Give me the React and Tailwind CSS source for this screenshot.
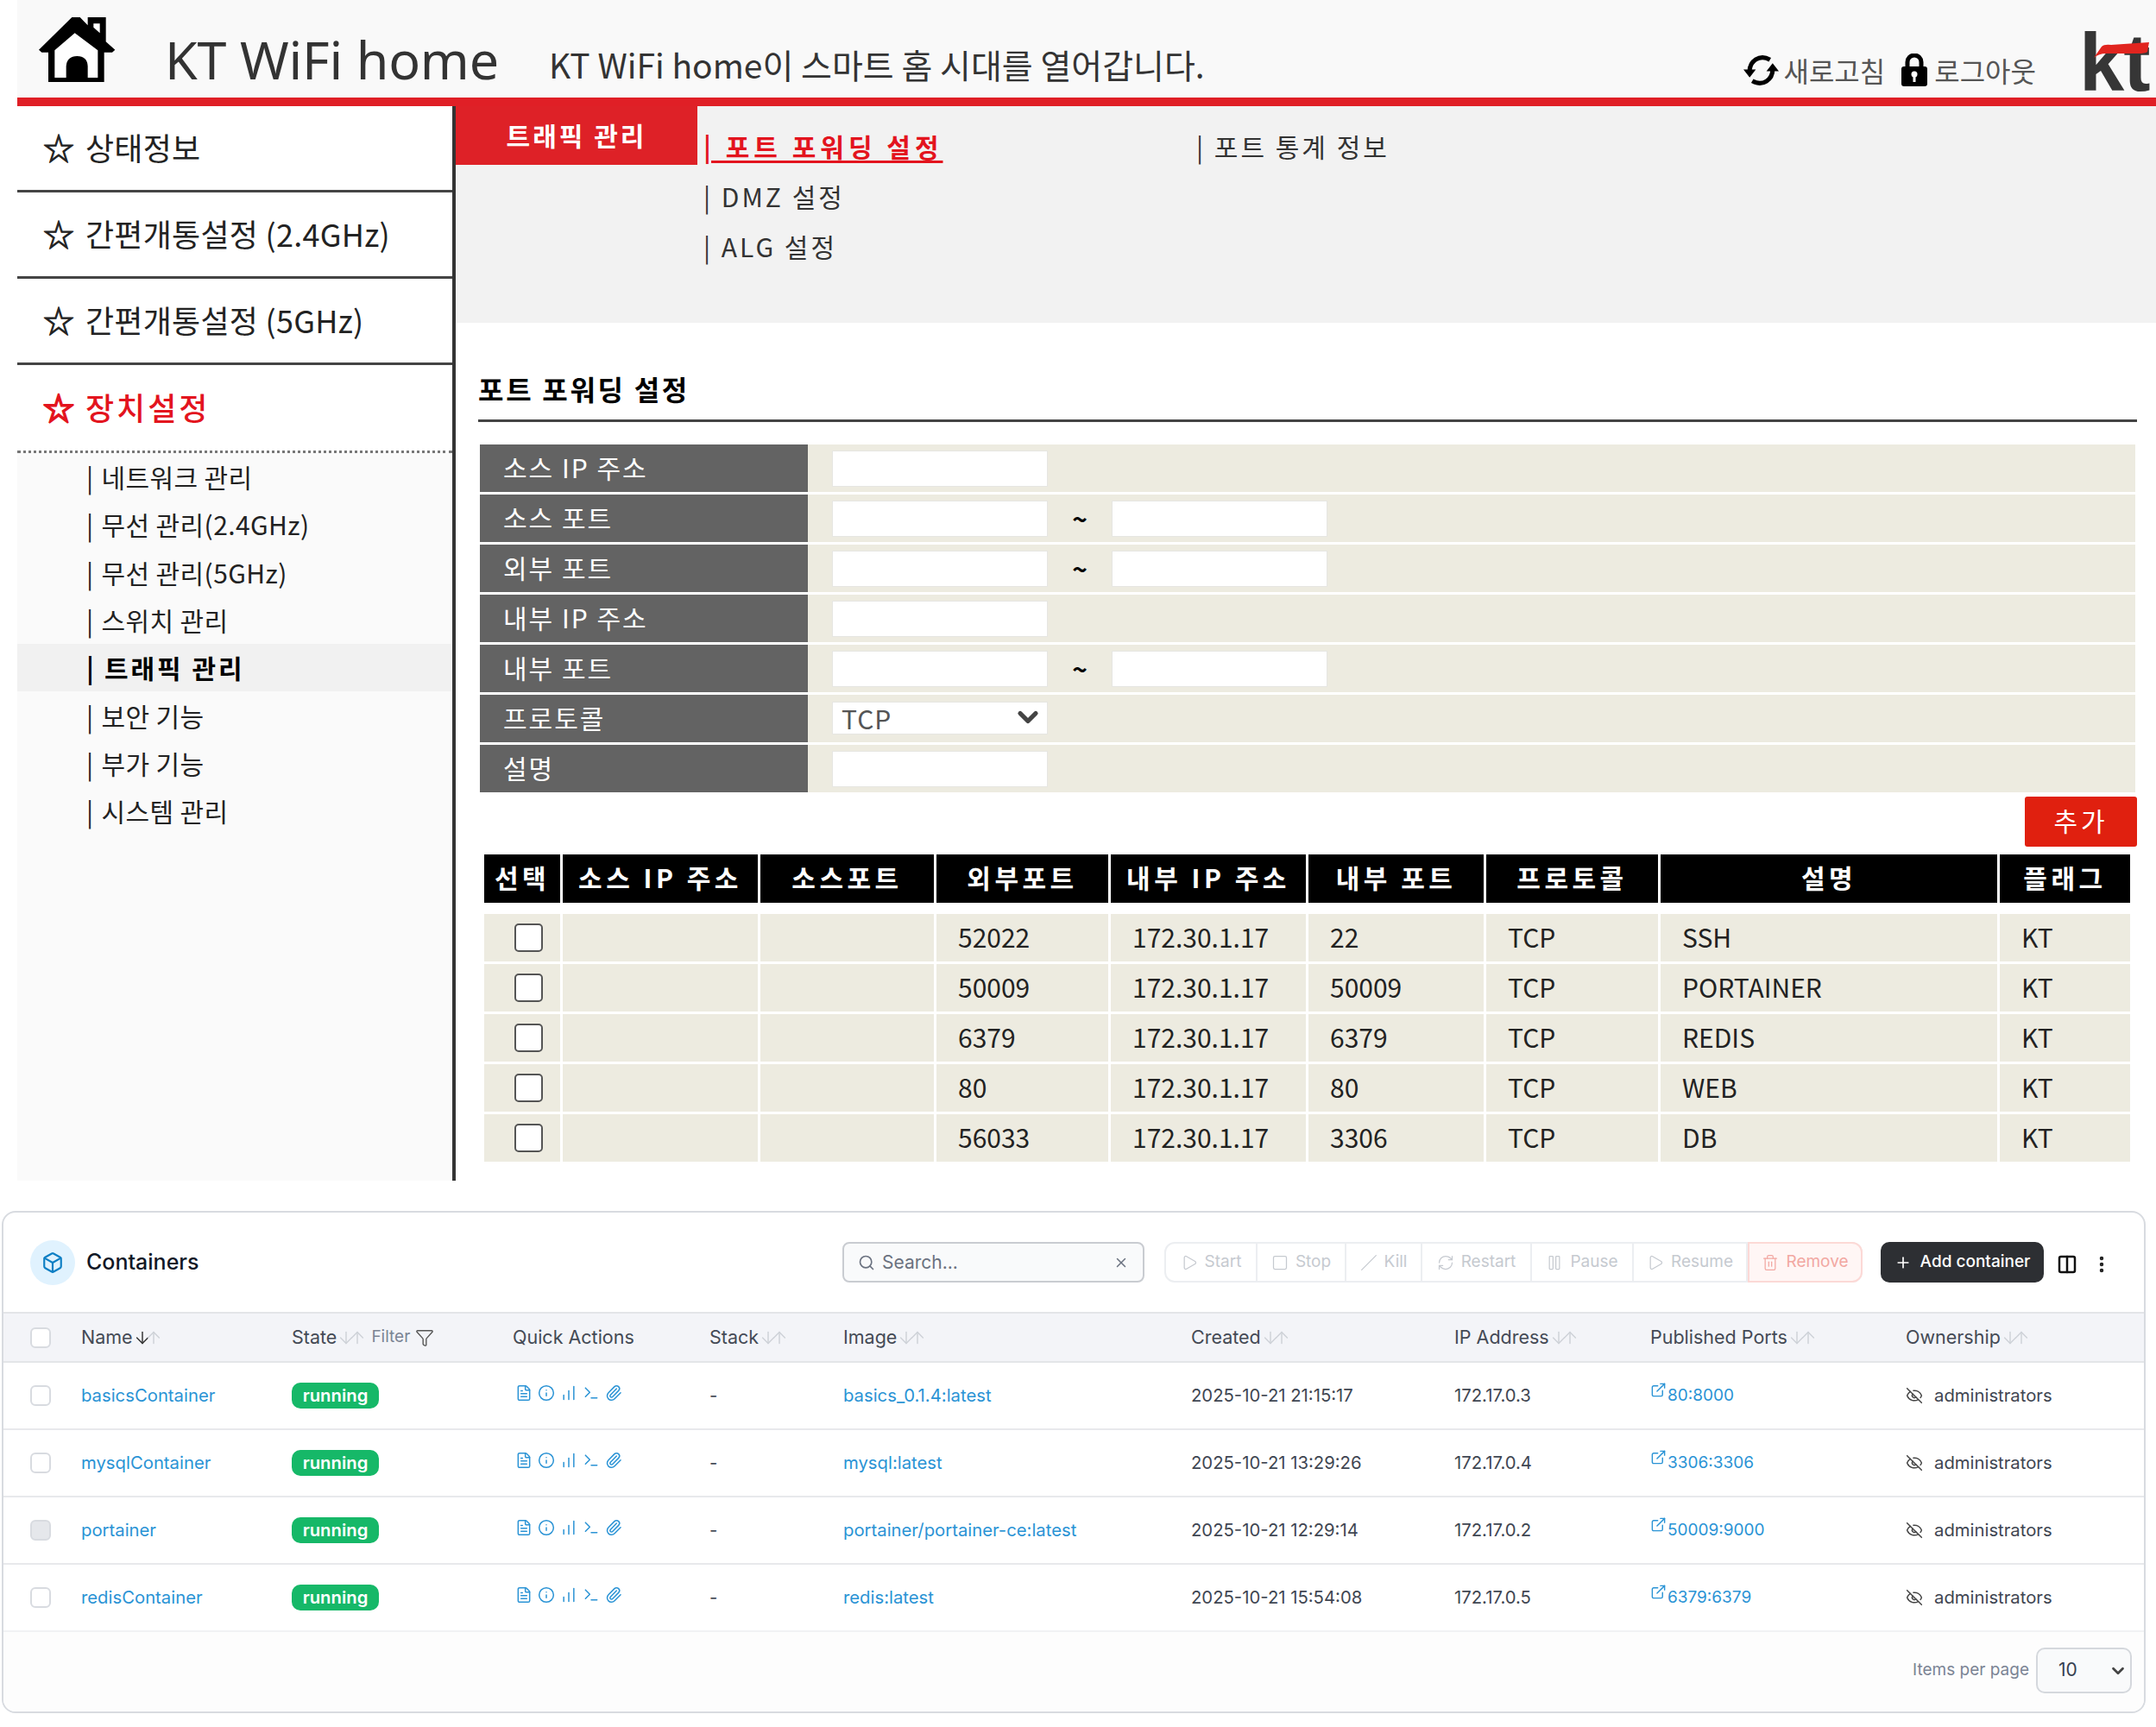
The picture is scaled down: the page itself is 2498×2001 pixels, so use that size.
import {
  ArrowDown, ArrowUp, Box, ChartNoAxesColumnIncreasing, ChevronDown, Columns2, EllipsisVertical, ExternalLink,
  EyeOff, FileText, Filter, Info, Paperclip, Pause, Play, Plus, RefreshCw, Search, Slash, Square, Terminal, Trash2, X,
} from 'lucide-react';

const sideMenu = ['상태정보', '간편개통설정 (2.4GHz)', '간편개통설정 (5GHz)'];
const subMenu = ['네트워크 관리', '무선 관리(2.4GHz)', '무선 관리(5GHz)', '스위치 관리', '트래픽 관리', '보안 기능', '부가 기능', '시스템 관리'];

const formRows = [
  { label: '소스 IP 주소' },
  { label: '소스 포트', range: true },
  { label: '외부 포트', range: true },
  { label: '내부 IP 주소' },
  { label: '내부 포트', range: true },
  { label: '프로토콜', select: true },
  { label: '설명' },
];

const portHeaders = ['선택', '소스 IP 주소', '소스포트', '외부포트', '내부 IP 주소', '내부 포트', '프로토콜', '설명', '플래그'];
const portRows = [
  ['52022', '172.30.1.17', '22', 'SSH'],
  ['50009', '172.30.1.17', '50009', 'PORTAINER'],
  ['6379', '172.30.1.17', '6379', 'REDIS'],
  ['80', '172.30.1.17', '80', 'WEB'],
  ['56033', '172.30.1.17', '3306', 'DB'],
];

const containers = [
  { name: 'basicsContainer', image: 'basics_0.1.4:latest', created: '2025-10-21 21:15:17', ip: '172.17.0.3', port: '80:8000' },
  { name: 'mysqlContainer', image: 'mysql:latest', created: '2025-10-21 13:29:26', ip: '172.17.0.4', port: '3306:3306' },
  { name: 'portainer', image: 'portainer/portainer-ce:latest', created: '2025-10-21 12:29:14', ip: '172.17.0.2', port: '50009:9000', locked: true },
  { name: 'redisContainer', image: 'redis:latest', created: '2025-10-21 15:54:08', ip: '172.17.0.5', port: '6379:6379' },
];

const actions = [
  { label: 'Start', icon: Play, w: 'w-[106px]' },
  { label: 'Stop', icon: Square, w: 'w-[103px]' },
  { label: 'Kill', icon: Slash, w: 'w-[88px]' },
  { label: 'Restart', icon: RefreshCw, w: 'w-[127px]' },
  { label: 'Pause', icon: Pause, w: 'w-[118px]' },
  { label: 'Resume', icon: Play, w: 'w-[132px]' },
];

const quickIcons = [FileText, Info, ChartNoAxesColumnIncreasing, Terminal, Paperclip];

function HomeIcon() {
  return (
    <svg viewBox="0 0 360 300" className="w-[120px] h-[100px] shrink-0">
      <path d="M45 143 160 30h28l27 28V30h63v85l32 28-10 9h-28v103H78V152H55z" fill="#000" />
      <path d="M170 85l80 60v95h-35v-40q-2-35-37-35t-38 35v40h-40v-95z" fill="#fff" />
      <path d="M235 52h22v33l-22-20z" fill="#fff" />
    </svg>
  );
}

function RefreshIcon() {
  return (
    <svg viewBox="0 0 40 40" className="w-[41px] h-[41px] shrink-0">
      <path d="M7 21C7 10 18 1 30 8M33 19C33 30 22 39 10 32" fill="none" stroke="#000" strokeWidth="5" />
      <path d="M0 19h14l-7 9zM26 21h14l-7-9z" fill="#000" />
    </svg>
  );
}

function LockIcon() {
  return (
    <svg viewBox="0 0 30 38" className="w-[30px] h-[38px] shrink-0">
      <path d="M7 16V10a8 8 0 0 1 16 0v6" fill="none" stroke="#000" strokeWidth="5" />
      <rect x="0" y="15" width="30" height="23" rx="3" fill="#000" />
      <circle cx="15" cy="24" r="3.5" fill="#fff" />
      <rect x="13.5" y="25" width="3" height="8" fill="#fff" />
    </svg>
  );
}

function KtLogo() {
  return (
    <div className="relative w-[85px] h-[70px] shrink-0 font-['Liberation_Sans',sans-serif] font-bold text-[94px] leading-[70px] tracking-[-1px] text-[#363636]">
      kt
      <svg viewBox="0 0 64 18" className="absolute left-[17px] top-[11px] w-[64px] h-[18px]">
        <path d="M0 18 9 5Q12 2 20 3L64 0 62 11Q60 13 50 13L14 13Q6 13 0 18z" fill="#e1251f" />
      </svg>
    </div>
  );
}

function Header() {
  return (
    <header className="ml-[20px] h-[113px] bg-[#f9f9f9] flex items-start text-[#333]">
      <div className="ml-[10px] mt-[10px]">
        <HomeIcon />
      </div>
      <div className="ml-[41px] mt-[29px] text-[61px] leading-[80px] font-['Noto_Sans',sans-serif] tracking-[-0.2px]">KT WiFi home</div>
      <div className="ml-[58px] mt-[47px] text-[39px] leading-[54px] whitespace-nowrap">KT WiFi home이 스마트 홈 시대를 열어갑니다.</div>
      <div className="ml-auto mt-[59px] flex items-center gap-[2px]">
        <RefreshIcon />
        <span className="ml-[3px] text-[32px] leading-[44px] text-[#555]">새로고침</span>
        <span className="ml-[17px]"><LockIcon /></span>
        <span className="ml-[6px] text-[32px] leading-[44px] text-[#555]">로그아웃</span>
      </div>
      <div className="ml-[50px] mt-[38px] mr-[4px]">
        <KtLogo />
      </div>
    </header>
  );
}

function Sidebar() {
  return (
    <aside className="ml-[20px] w-[508px] shrink-0 border-r-4 border-[#333] flex flex-col text-[36px] text-[#222]">
      {sideMenu.map((item) => (
        <div key={item} className="h-[100px] border-b-[3px] border-[#444] flex items-center pl-[30px] pb-[3px] tracking-[0.25px] whitespace-nowrap">
          <span className="w-[49px] shrink-0 [-webkit-text-stroke:1px_#222]">☆</span>{item}
        </div>
      ))}
      <div className="h-[102px] border-b-[3px] border-dotted border-[#777] flex items-center pl-[30px] pb-[3px] text-[#e3141e] font-medium tracking-[3px]">
        <span className="w-[49px] shrink-0 tracking-normal [-webkit-text-stroke:2px_#e3141e]">☆</span>장치설정
      </div>
      <ul className="flex-1 bg-[#fafafa] text-[30px]">
        {subMenu.map((item) => (
          <li key={item} className={`h-[55.3px] flex items-center pl-[80px] ${item === '트래픽 관리' ? 'bg-[#f1f1f1] font-bold text-black tracking-[3px]' : 'tracking-[0.4px]'}`}>
            <span className="mr-[9px]">|</span>{item}
          </li>
        ))}
      </ul>
    </aside>
  );
}

function TopTabs() {
  return (
    <div className="h-[251px] bg-[#f2f2f2] flex text-[30px] text-[#333] tracking-[3px]">
      <div className="w-[280px] h-[68px] bg-[#de2127] text-white font-bold flex items-center justify-center pb-[2px]">트래픽 관리</div>
      <div className="ml-[7px] pt-[17px] grid grid-cols-[571px_auto] auto-rows-[58px] items-center">
        <span className="text-[#e3141e] font-bold tracking-[5px] underline underline-offset-4">| 포트 포워딩 설정</span>
        <span>| 포트 통계 정보</span>
        <span className="col-start-1">| DMZ 설정</span>
        <span className="col-start-1">| ALG 설정</span>
      </div>
    </div>
  );
}

function PortForm() {
  const field = 'w-[250px] h-[42px] bg-white border border-[#e6e6e2] outline-none';
  return (
    <div className="ml-[2px] w-[1918px] flex flex-col gap-[3px] text-[30px]">
      {formRows.map((row) => (
        <div key={row.label} className="h-[55px] flex bg-[#edebe0]">
          <div className="w-[380px] bg-[#636363] text-white flex items-center pl-[27px] pb-[2px] tracking-[2px]">{row.label}</div>
          <div className="ml-[28px] flex items-center">
            {row.select ? (
              <div className="relative">
                <select className={`${field} !h-[38px] appearance-none pl-[10px] text-[30px] leading-[34px] tracking-[1px] text-[#555]`} defaultValue="TCP">
                  <option>TCP</option>
                </select>
                <ChevronDown size={36} strokeWidth={3.5} className="absolute right-[5px] top-[3px] text-[#444]" />
              </div>
            ) : (
              <input className={field} />
            )}
            {row.range && (
              <>
                <span className="w-[74px] text-center text-black text-[30px] font-bold">~</span>
                <input className={field} />
              </>
            )}
          </div>
        </div>
      ))}
    </div>
  );
}

function PortTable() {
  const cols = 'grid grid-cols-[88px_226px_201px_199px_226px_203px_199px_390px_151px] gap-x-[3px]';
  return (
    <div className="ml-[7px] text-[30px]">
      <div className={`${cols} h-[56px]`}>
        {portHeaders.map((h) => (
          <div key={h} className="bg-black text-white font-bold tracking-[4.5px] flex items-center justify-center pb-[3px] whitespace-nowrap">{h}</div>
        ))}
      </div>
      <div className="mt-[13px] flex flex-col gap-[3px] text-[#222]">
        {portRows.map((r) => (
          <div key={r[0]} className={`${cols} h-[55px]`}>
            <div className="bg-[#edebe0] flex items-center pl-[35px]">
              <input type="checkbox" className="appearance-none w-[33px] h-[33px] bg-white border-2 border-[#555] rounded-[5px]" />
            </div>
            <div className="bg-[#edebe0]" />
            <div className="bg-[#edebe0]" />
            {[r[0], r[1], r[2], 'TCP', r[3], 'KT'].map((v, i) => (
              <div key={i} className="bg-[#edebe0] flex items-center pl-[25px] pb-[3px]">{v}</div>
            ))}
          </div>
        ))}
      </div>
    </div>
  );
}

function SortArrows({ active }) {
  return (
    <span className="inline-flex text-[#ced2d8]">
      <ArrowDown size={22} strokeWidth={1.6} className={active ? 'text-[#333]' : ''} />
      <ArrowUp size={22} strokeWidth={1.6} className="-ml-[9px]" />
    </span>
  );
}

function Containers() {
  const cols = 'grid grid-cols-[90px_244px_256px_228px_155px_403px_305px_227px_296px_276px] items-center';
  const link = 'text-[#2a93d5]';
  return (
    <section className="mt-[35px] ml-[2px] w-[2484px] h-[582px] border-2 border-[#d8dbe0] rounded-[16px] bg-white font-['Inter',sans-serif] text-[20.3px] text-[#3f4652] overflow-hidden flex flex-col">
      <div className="h-[115px] shrink-0 flex items-center pl-[31px] pr-[37px]">
        <div className="w-[52px] h-[52px] rounded-full bg-[#e0f2fe] flex items-center justify-center">
          <Box size={26} className="text-[#0e7fc4]" />
        </div>
        <h2 className="ml-[13px] text-[25px] font-medium text-[#111827]">Containers</h2>
        <div className="ml-auto w-[350px] h-[47px] border-2 border-[#c9ccd1] rounded-[8px] bg-[#f9fafb] flex items-center px-[16px] text-[#6b7280]">
          <Search size={20} />
          <span className="ml-[8px] flex-1 text-[21px]">Search...</span>
          <X size={18} />
        </div>
        <div className="ml-[23px] h-[47px] flex border-2 border-[#eceef1] rounded-[12px] text-[19px] text-[#c6cad0]">
          {actions.map((a) => (
            <div key={a.label} className={`${a.w} flex items-center justify-center gap-[8px] border-r-2 border-[#eceef1]`}>
              <a.icon size={20} strokeWidth={1.5} />
              {a.label}
            </div>
          ))}
          <div className="w-[133px] -my-[2px] -mr-[2px] flex items-center justify-center gap-[8px] border-2 border-[#fcd9d6] rounded-r-[12px] bg-[#fff6f5] text-[#f2a8a2]">
            <Trash2 size={20} strokeWidth={1.5} />
            Remove
          </div>
        </div>
        <button className="ml-[21px] w-[189px] h-[47px] bg-[#2d2f33] rounded-[10px] text-[19px] text-white font-medium flex items-center justify-center gap-[10px]">
          <Plus size={20} />
          Add container
        </button>
        <Columns2 size={24} strokeWidth={2.5} className="ml-[15px] mt-[4px] text-[#111]" />
        <EllipsisVertical size={24} strokeWidth={2.5} className="ml-[16px] mt-[4px] text-[#222]" />
      </div>

      <div className={`${cols} h-[59px] shrink-0 bg-[#f3f4f8] border-y-2 border-[#e3e5e8] text-[21.5px] text-[#444a55]`}>
        <div className="pl-[31px]"><span className="block w-[24px] h-[24px] bg-white border-2 border-[#d8dbe0] rounded-[6px]" /></div>
        <div className="flex items-center">Name<SortArrows active /></div>
        <div className="flex items-center">
          State<SortArrows />
          <span className="ml-[5px] text-[19px] text-[#7b8494]">Filter</span>
          <Filter size={22} strokeWidth={1.5} className="ml-[6px] text-[#555]" />
        </div>
        <div>Quick Actions</div>
        <div className="flex items-center">Stack<SortArrows /></div>
        <div className="flex items-center">Image<SortArrows /></div>
        <div className="flex items-center">Created<SortArrows /></div>
        <div className="flex items-center">IP Address<SortArrows /></div>
        <div className="flex items-center">Published Ports<SortArrows /></div>
        <div className="flex items-center">Ownership<SortArrows /></div>
      </div>

      {containers.map((c, i) => (
        <div key={c.name} className={`${cols} h-[78px] shrink-0 border-b-2 ${i === 3 ? 'border-[#f1f2f4]' : 'border-[#e8e9ec]'}`}>
          <div className="pl-[31px]">
            <span className={`block w-[24px] h-[24px] border-2 border-[#d8dbe0] rounded-[6px] ${c.locked ? 'bg-[#e5e7eb]' : 'bg-white'}`} />
          </div>
          <div className={link}>{c.name}</div>
          <div>
            <span className="inline-flex items-center justify-center w-[101px] h-[30px] rounded-[10px] bg-[#16b868] text-white font-semibold">running</span>
          </div>
          <div className={`${link} flex items-center gap-[6px] pl-[3px] -mt-[6px]`}>
            {quickIcons.map((Icon, n) => (
              <Icon key={n} size={20} strokeWidth={1.8} />
            ))}
          </div>
          <div>-</div>
          <div className={link}>{c.image}</div>
          <div>{c.created}</div>
          <div>{c.ip}</div>
          <div className={`${link} flex items-start text-[19px]`}>
            <ExternalLink size={19} strokeWidth={1.8} className="-mt-[2px] shrink-0 mr-[1px]" />
            {c.port}
          </div>
          <div className="flex items-center">
            <EyeOff size={20} strokeWidth={1.8} className="text-[#444]" />
            <span className="ml-[13px]">administrators</span>
          </div>
        </div>
      ))}

      <div className="flex-1 flex items-center justify-end pr-[14px] pb-[4px] text-[#7b8494] text-[19px] bg-[#fdfdfd]">
        Items per page
        <div className="relative ml-[8px]">
          <select className="appearance-none w-[111px] h-[53px] pl-[24px] border-2 border-[#d5d8dd] rounded-[10px] bg-[#f9fafb] text-[#374151] text-[21px]" defaultValue="10">
            <option>10</option>
          </select>
          <ChevronDown size={22} strokeWidth={3} className="absolute right-[5px] top-[16px] text-[#444]" />
        </div>
      </div>
    </section>
  );
}

export default function App() {
  return (
    <div className="w-[2498px] h-[2001px] overflow-hidden bg-white font-['Noto_Sans_CJK_KR','Noto_Sans',sans-serif]">
      <Header />
      <div className="ml-[20px] h-[10px] bg-[#e01f26]" />
      <main className="flex h-[1245px]">
        <Sidebar />
        <div className="flex-1 min-w-0">
          <TopTabs />
          <div className="pl-[26px] pr-[22px]">
            <h1 className="h-[115px] border-b-[3px] border-[#444] flex items-end pb-[12px] text-[32px] font-bold tracking-[2.7px] text-black">포트 포워딩 설정</h1>
            <div className="mt-[26px]">
              <PortForm />
            </div>
            <div className="mt-[5px] flex justify-end">
              <button className="w-[130px] h-[58px] bg-[#e0200f] rounded-[3px] text-white text-[30px] tracking-[4px] pb-[3px]">추가</button>
            </div>
            <div className="mt-[9px]">
              <PortTable />
            </div>
          </div>
        </div>
      </main>
      <Containers />
    </div>
  );
}
